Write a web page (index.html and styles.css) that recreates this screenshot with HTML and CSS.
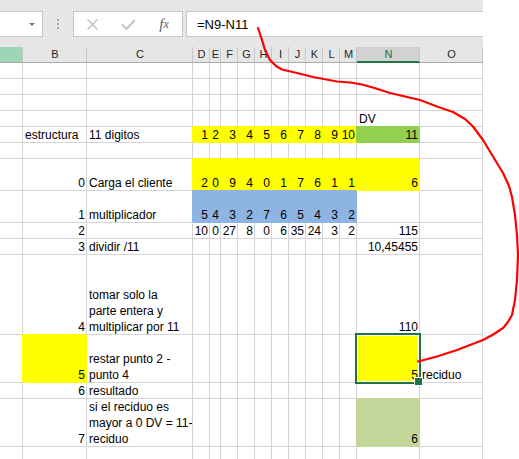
FILE: index.html
```html
<!DOCTYPE html>
<html lang="es">
  <head>
    <meta charset="UTF-8" />
    <meta name="viewport" content="width=device-width, initial-scale=1.0" />
    <title>Digito verificador</title>

    <link rel="stylesheet" href="styles.css">
  </head>

  <body>
    <div class="app">
      <div class="toolbar">
        <div class="namebox"><span class="caret"></span></div>
        <div class="grip"></div>
        <div class="actions">
          <span class="btn">
            <svg width="11" height="11" viewBox="0 0 11 11">
              <path d="M0.5 0.5 L10.5 10.5 M10.5 0.5 L0.5 10.5" stroke="#c3c3c3" stroke-width="1.5" fill="none" />
            </svg>
          </span>
          <span class="btn">
            <svg width="15" height="11" viewBox="0 0 15 11">
              <path d="M1 5.5 L5.5 10 L14 1" stroke="#c3c3c3" stroke-width="2" fill="none" />
            </svg>
          </span>
          <span class="btn fx"><i>f</i><i class="fx-x">x</i></span>
        </div>
        <div class="formula">=N9-N11</div>
      </div>

      <div class="heads cols">
        <div class="head head--hint"></div>
        <div class="head">B</div>
        <div class="head">C</div>
        <div class="head">D</div>
        <div class="head">E</div>
        <div class="head">F</div>
        <div class="head">G</div>
        <div class="head">H</div>
        <div class="head">I</div>
        <div class="head">J</div>
        <div class="head">K</div>
        <div class="head">L</div>
        <div class="head">M</div>
        <div class="head head--active">N</div>
        <div class="head">O</div>
      </div>

      <div class="sheet cols" id="sheet"></div>

      <svg class="ink" width="519" height="459" viewBox="0 0 519 459">
        <path d="M258 28 L262 40 L265 50 L270 60 L276 66 L282 69.5 L297 73 L313 77 L337 81.5 L350 82.5 L362 84.5 L373 87.5 L390 93 L405 96.5 L420 100 L437 106.5 L453 112 L465 119 L473 126.5 L483 140 L493 156.5 L503 173 L509 186 L512 197 L515 215 L517 235 L518 255 L517 280 L515 300 L512 315 L508 322 L503 328 L494 334 L483 340 L470 345 L457 350 L437 356.5 L418 361.5"
          stroke="#ff0000" stroke-width="2.2" fill="none" stroke-linejoin="round" stroke-linecap="round" />
      </svg>
    </div>

    <script>
      const COLS = "ABCDEFGHIJKLMNO".split("");
      const DIGITS = "DEFGHIJKLM".split("");

      // spread a list of values over the D..M digit columns
      const digits = (list) =>
        Object.fromEntries(list.map((v, i) => [DIGITS[i], v]));

      const range = (from, to, color) =>
        Object.fromEntries(
          COLS.slice(COLS.indexOf(from), COLS.indexOf(to) + 1).map((c) => [c, color])
        );

      const rows = [
        { h: 16 },
        { h: 16 },
        { h: 16 },
        { h: 16, cells: { N: "DV" } },
        {
          h: 16,
          cells: { B: "estructura", C: "11 digitos", ...digits([1, 2, 3, 4, 5, 6, 7, 8, 9, 10]), N: 11 },
          fill: { ...range("D", "M", "yellow"), N: "green" }
        },
        { h: 16 },
        {
          h: 32,
          cells: { B: 0, C: "Carga el cliente", ...digits([2, 0, 9, 4, 0, 1, 7, 6, 1, 1]), N: 6 },
          fill: range("D", "N", "yellow")
        },
        {
          h: 32,
          cells: { B: 1, C: "multiplicador", ...digits([5, 4, 3, 2, 7, 6, 5, 4, 3, 2]) },
          fill: range("D", "M", "blue")
        },
        { h: 16, cells: { B: 2, ...digits([10, 0, 27, 8, 0, 6, 35, 24, 3, 2]), N: 115 } },
        { h: 16, cells: { B: 3, C: "dividir /11", N: "10,45455" } },
        { h: 80, cells: { B: 4, C: "tomar solo la\nparte entera y\nmultiplicar por 11", N: 110 } },
        {
          h: 48,
          cells: { B: 5, C: "restar punto 2 -\npunto 4", N: 5, O: "reciduo" },
          fill: { B: "yellow", N: "yellow" },
          active: "N"
        },
        { h: 16, cells: { B: 6, C: "resultado" } },
        {
          h: 48,
          cells: { B: 7, C: "si el reciduo es\nmayor a 0 DV = 11-\nreciduo", N: 6 },
          fill: { N: "olive" }
        },
        { h: 16 }
      ];

      const sheet = document.getElementById("sheet");
      sheet.style.gridTemplateRows = rows.map((r) => r.h + "px").join(" ");

      rows.forEach((row) => {
        COLS.forEach((col) => {
          const el = document.createElement("div");
          const value = row.cells && row.cells[col];
          const fill = row.fill && row.fill[col];

          el.className = "cell";
          if (value !== undefined) {
            el.textContent = value;
            if (typeof value === "number" || /^[\d,]+$/.test(value)) {
              el.classList.add("num");
            }
          }
          if (fill) el.classList.add("fill-" + fill);
          if (row.active === col) el.classList.add("active");

          sheet.appendChild(el);
        });
      });
    </script>
  </body>
</html>
```

FILE: styles.css
```css
* {
  box-sizing: border-box;
}

body {
  margin: 0;
  background: #fff;
  font-family: "Liberation Sans", Arial, sans-serif;
}

.app {
  position: relative;
  width: 519px;
  height: 459px;
  overflow: hidden;
}

/* formula bar */

.toolbar {
  display: flex;
  align-items: flex-start;
  width: 483px;
  height: 37px;
  padding-top: 11px;
  background: #e6e6e6;
}

.namebox {
  width: 44px;
  height: 26px;
  margin-left: -1px;
  padding-right: 7px;
  border: 1px solid #c6c6c6;
  background: #fff;
  display: flex;
  align-items: center;
  justify-content: flex-end;
}

.caret {
  width: 0;
  height: 0;
  border-left: 3px solid transparent;
  border-right: 3px solid transparent;
  border-top: 3px solid #707070;
}

.grip {
  width: 2px;
  height: 10px;
  margin: 8px 0 0 14px;
  background: repeating-linear-gradient(#a8a8a8 0 2px, transparent 2px 4px);
}

.actions {
  width: 110px;
  height: 26px;
  margin-left: 14px;
  border: 1px solid #c6c6c6;
  background: #fff;
  display: grid;
  grid-template-columns: repeat(3, 1fr);
  align-items: center;
}

.btn {
  display: flex;
  justify-content: center;
  align-items: center;
}

.fx {
  font-family: "Liberation Serif", serif;
  font-size: 15px;
  color: #5f5f5f;
  line-height: 16px;
}

.fx-x {
  font-size: 12px;
}

.formula {
  flex: 1;
  height: 26px;
  margin-left: 3px;
  padding-left: 10px;
  border: 1px solid #c6c6c6;
  border-right: 0;
  background: #fff;
  font-size: 13px;
  line-height: 25px;
  color: #000;
}

/* grid */

.cols {
  display: grid;
  grid-template-columns: 23px 64px 106px 17px 11px repeat(8, 17px) 63px 63px;
  width: 483px;
}

.heads {
  padding-top: 10px;
  background: #e6e6e6;
  border-bottom: 1px solid #ababab;
}

.head {
  height: 15px;
  font-size: 11px;
  line-height: 14px;
  text-align: center;
  color: #262626;
  box-shadow: inset -1px 0 0 #c6c6c6;
}

.head--hint {
  background: #9fd5b7;
}

.head--active {
  background: #d2d2d2;
  color: #217346;
  box-shadow: inset -1px 0 0 #c6c6c6, inset 0 -1px 0 #217346, 0 1px 0 #217346;
}

.sheet {
  font-size: 12px;
  color: #000;
}

.cell {
  display: flex;
  align-items: flex-end;
  padding: 0 2px;
  line-height: 16px;
  white-space: pre;
  box-shadow: inset -1px -1px 0 #d4d4d4;
}

.cell.num {
  justify-content: flex-end;
}

.fill-yellow {
  background: #ffff00;
  box-shadow: -1px -1px 0 #ffff00;
}

.fill-green {
  background: #92d050;
  box-shadow: -1px -1px 0 #92d050;
}

.fill-blue {
  background: #8db4e2;
  box-shadow: -1px -1px 0 #8db4e2;
}

.fill-olive {
  background: #c4d79b;
  box-shadow: -1px -1px 0 #c4d79b;
}

.active {
  position: relative;
}

.active::after {
  content: "";
  position: absolute;
  left: -2px;
  top: -2px;
  right: -1px;
  bottom: -1px;
  border: 2px solid #217346;
  box-shadow: inset 0 0 0 1px #fff;
  z-index: 1;
}

.active::before {
  content: "";
  position: absolute;
  right: -3px;
  bottom: -3px;
  width: 7px;
  height: 7px;
  border: 1px solid #fff;
  background: #217346;
  z-index: 2;
}

/* hand drawn arrow on top */

.ink {
  position: absolute;
  left: 0;
  top: 0;
  pointer-events: none;
  z-index: 3;
}
```
